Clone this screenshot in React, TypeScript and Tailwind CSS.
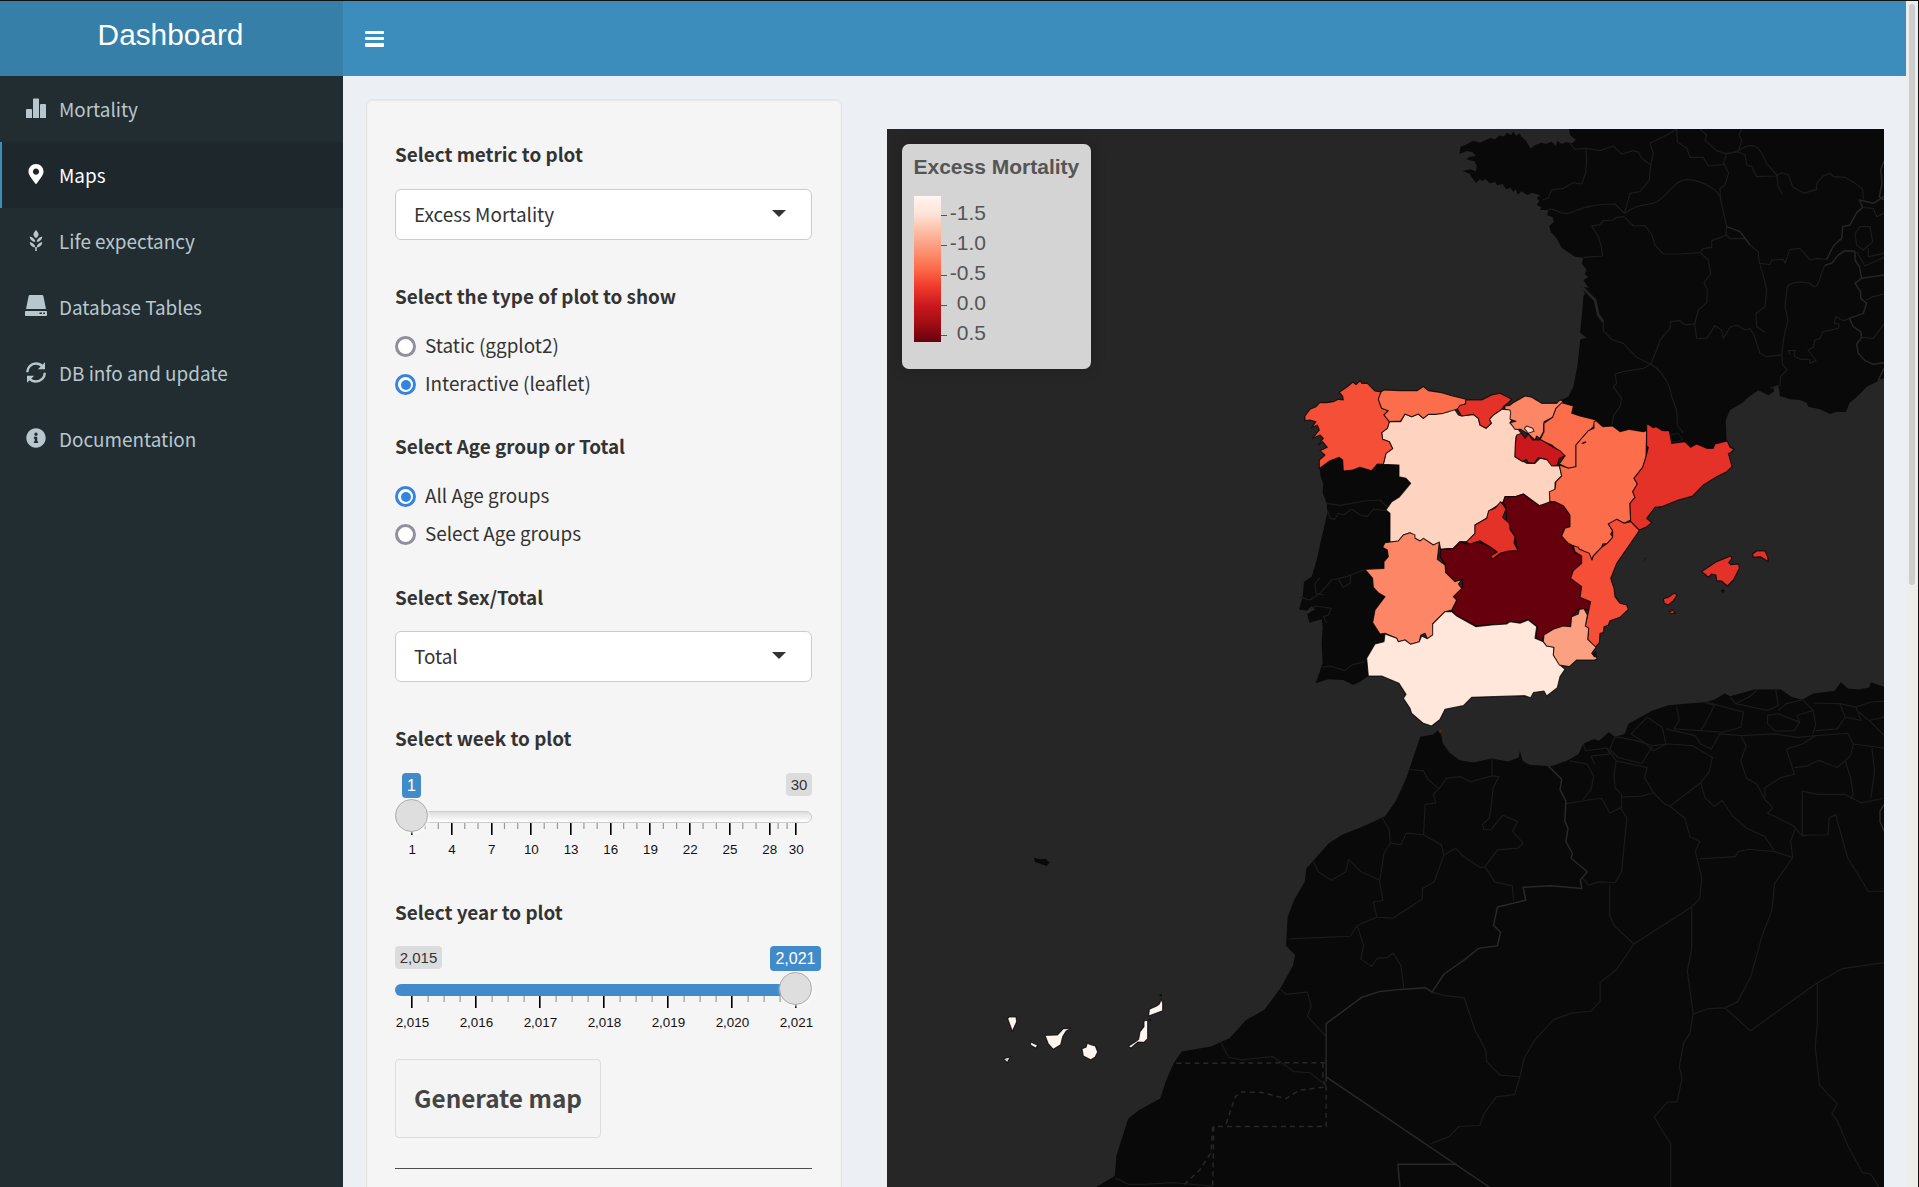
import { ReactNode } from "react";
import { FaMapMarkerAlt, FaInfoCircle } from "react-icons/fa";

const SANS = "font-['Noto_Sans_CJK_SC',sans-serif]";
const ARIAL = "font-['Liberation_Sans',Arial,sans-serif]";

function BarsIcon() {
  return (
    <svg width="20" height="20" viewBox="0 0 20 20" fill="currentColor">
      <path d="M0 12a1 1 0 0 1 1-1h4a1 1 0 0 1 1 1v8H0zM7 1.500a1 1 0 0 1 1-1h4a1 1 0 0 1 1 1V20H7zM14 7a1 1 0 0 1 1-1h4a1 1 0 0 1 1 1v13h-6z" />
    </svg>
  );
}

function GrainIcon() {
  return (
    <svg width="14" height="21" viewBox="0 0 14 21" fill="currentColor">
      <path d="M7 0c1.500 1.500 2.500 3 2.500 4.500S8.500 7 7 8.200C5.500 7 4.500 6 4.500 4.500S5.500 1.500 7 0z" />
      <path d="M.7 6.500C4 7.200 6.200 9 6.300 12 3 11.600.8 9.700.7 6.500zM13.300 6.500C10 7.200 7.800 9 7.700 12c3.300-.4 5.500-2.300 5.600-5.500z" />
      <path d="M.7 12C4 12.700 6.200 14.500 6.300 17.500 3 17.100.8 15.200.7 12zM13.300 12C10 12.700 7.800 14.500 7.700 17.500c3.300-.4 5.500-2.300 5.600-5.500z" />
      <path d="M6.200 17h1.600v4H6.200z" />
    </svg>
  );
}

function DiskIcon() {
  return (
    <svg width="22" height="22" viewBox="0 0 22 22" fill="currentColor">
      <path d="M4.800 0h12.400c.6 0 1 .3 1.100.8L21 14H1L3.700.8C3.800.3 4.200 0 4.800 0z" />
      <path
        fillRule="evenodd"
        d="M1 16h20c.6 0 1 .4 1 1v3c0 .6-.4 1-1 1H1c-.6 0-1-.4-1-1v-3c0-.6.400-1 1-1zm13.500 1.600v1.500H17v-1.500zm3.800 0v1.500h1.700v-1.500z"
      />
    </svg>
  );
}

function RefreshIcon() {
  return (
    <svg width="20" height="21" viewBox="0 0 20 21">
      <g fill="none" stroke="currentColor" strokeWidth="2.400">
        <path d="M1.200 10.300C1.200 5.300 5.200 1.500 10 1.500c2.600 0 4.800 1 6.500 2.900" />
        <path d="M18.800 10.700c0 5-4 8.800-8.800 8.800-2.600 0-4.800-1-6.500-2.900" />
      </g>
      <path d="M19 .3v7h-7.200zM1 20.700v-7h7.200z" fill="currentColor" />
    </svg>
  );
}

function NavItem({ icon, label, active }: { icon: ReactNode; label: string; active?: boolean }) {
  return (
    <a
      className={
        active
          ? "flex h-[66px] items-center border-l-2 border-[#3c8dbc] bg-[#1e272c] pl-[22px] text-white"
          : "flex h-[66px] items-center border-l-2 border-transparent pl-[22px] text-[#b8c7ce]"
      }
    >
      <span className="mb-[2px] flex w-[23px] justify-center">{icon}</span>
      <span className="ml-[12px] text-[18.900px] leading-7">{label}</span>
    </a>
  );
}

function Sidebar() {
  return (
    <nav className="flex w-[343px] shrink-0 flex-col bg-[#222d32]">
      <NavItem icon={<BarsIcon />} label="Mortality" />
      <NavItem icon={<FaMapMarkerAlt size={20} />} label="Maps" active />
      <NavItem icon={<GrainIcon />} label="Life expectancy" />
      <NavItem icon={<DiskIcon />} label="Database Tables" />
      <NavItem icon={<RefreshIcon />} label="DB info and update" />
      <NavItem icon={<FaInfoCircle size={20} />} label="Documentation" />
    </nav>
  );
}

function Label({ children }: { children: ReactNode }) {
  return <div className="h-7 text-[18.900px] font-bold leading-[27px] text-[#333]">{children}</div>;
}

function SelectBox({ value }: { value: string }) {
  return (
    <div className="mt-[21px] flex h-[51px] items-center justify-between rounded-[6px] border border-[#ccc] bg-white pl-[18px] pr-[25px]">
      <span className="mb-[2px] text-[18.900px] leading-7 text-[#333]">{value}</span>
      <svg width="14" height="7" viewBox="0 0 14 7" className="mb-[2px]">
        <path d="M0 0h14L7 7z" fill="#333" />
      </svg>
    </div>
  );
}

function Radio({ label, checked }: { label: string; checked?: boolean }) {
  return (
    <div className="flex h-7 items-center gap-[9px]">
      {checked ? (
        <span className="mt-[3px] flex size-[21px] items-center justify-center rounded-full border-3 border-[#3584e4] bg-white">
          <span className="size-[10px] rounded-full bg-[#3584e4]" />
        </span>
      ) : (
        <span className="mt-[3px] size-[21px] rounded-full border-3 border-[#8f8f9d] bg-white" />
      )}
      <span className="mb-px text-[18.900px] leading-7 text-[#333]">{label}</span>
    </div>
  );
}

function Axis({ major, minor }: { major: { x: number; text: string }[]; minor: number[] }) {
  return (
    <svg width="437" height="40" viewBox="-10 0 437 40" className="-ml-[10px] block">
      {minor.map((x) => (
        <rect key={x} x={x - 0.5} y="0" width="1.200" height="6" fill="#999" />
      ))}
      {major.map((m) => (
        <g key={m.text}>
          <rect x={Math.round(m.x - 0.6)} y="0" width="1.600" height="12" fill="#000" />
          <text x={m.x + 0.5} y="31" textAnchor="middle" fontSize="13.400" fill="#111" fontFamily="Liberation Sans, Arial, sans-serif">
            {m.text}
          </text>
        </g>
      ))}
    </svg>
  );
}

const WEEKS = [1, 4, 7, 10, 13, 16, 19, 22, 25, 28, 30];
const weekX = (w: number) => 16.7 + (w - 1) * 13.24;
const WEEK_MAJOR = WEEKS.map((w) => ({ x: weekX(w), text: String(w) }));
const WEEK_MINOR = [
  ...Array.from({ length: 27 }, (_, i) => i + 1).filter((w) => (w - 1) % 3 !== 0).map(weekX),
  383,
  392,
];
const YEAR_MAJOR = Array.from({ length: 7 }, (_, i) => ({ x: 16.9 + i * 64, text: `2,0${15 + i}` }));
const YEAR_MINOR = Array.from({ length: 24 }, (_, i) => i)
  .filter((i) => i % 4 !== 0)
  .map((i) => 17 + i * 16);

function Handle() {
  return (
    <span className="block size-[33px] rounded-full border border-[#ababab] bg-[#dedede] shadow-[1px_1px_3px_rgba(255,255,255,0.8)]" />
  );
}

function WeekSlider() {
  return (
    <div className={`mt-[21px] ${ARIAL}`}>
      <div className="flex h-[38px] items-start justify-between">
        <span className="ml-[7px] flex h-[25px] w-[19px] items-center justify-center rounded-[4px] bg-[#428bca] text-[16px] text-white">1</span>
        <span className="flex h-[23px] w-[26px] items-center justify-center rounded-[4px] bg-[#dcdcdc] pt-px text-[15px] text-[#333]">30</span>
      </div>
      <div className="relative z-10 h-3 rounded-full border border-[#ccc] bg-linear-to-b from-[#dedede] to-white">
        <span className="absolute -left-px -top-[13px]">
          <Handle />
        </span>
      </div>
      <Axis major={WEEK_MAJOR} minor={WEEK_MINOR} />
    </div>
  );
}

function YearSlider() {
  return (
    <div className={`mt-[20px] ${ARIAL}`}>
      <div className="flex h-[38px] items-start justify-between">
        <span className="flex h-[23px] w-[47px] items-center justify-center rounded-[4px] bg-[#dcdcdc] pt-px text-[15px] text-[#333]">2,015</span>
        <span className="-mr-[9px] flex h-[25px] w-[51px] items-center justify-center rounded-[4px] bg-[#428bca] text-[16px] text-white">2,021</span>
      </div>
      <div className="relative z-10 mr-[17px] h-3 rounded-l-full bg-[#428bca]">
        <span className="absolute -right-[17px] -top-[12px]">
          <Handle />
        </span>
      </div>
      <Axis major={YEAR_MAJOR} minor={YEAR_MINOR} />
    </div>
  );
}

function Controls() {
  return (
    <form className="h-[1300px] w-[476px] shrink-0 rounded-[6px] border border-[#e3e3e3] bg-[#f5f5f5] pl-7 pr-[29px] pt-10 shadow-[inset_0_1px_2px_rgba(0,0,0,0.06)]">
      <div className="h-[142px]">
        <Label>Select metric to plot</Label>
        <SelectBox value="Excess Mortality" />
      </div>
      <div className="h-[150px]">
        <Label>Select the type of plot to show</Label>
        <div className="mt-[21px] flex flex-col gap-[10px]">
          <Radio label="Static (ggplot2)" />
          <Radio label="Interactive (leaflet)" checked />
        </div>
      </div>
      <div className="h-[151px]">
        <Label>Select Age group or Total</Label>
        <div className="mt-[21px] flex flex-col gap-[10px]">
          <Radio label="All Age groups" checked />
          <Radio label="Select Age groups" />
        </div>
      </div>
      <div className="h-[141px]">
        <Label>Select Sex/Total</Label>
        <div className="-mt-px">
          <SelectBox value="Total" />
        </div>
      </div>
      <div className="h-[174px]">
        <Label>Select week to plot</Label>
        <WeekSlider />
      </div>
      <div className="h-[161px]">
        <Label>Select year to plot</Label>
        <YearSlider />
      </div>
      <button
        type="button"
        className="flex h-[79px] w-[206px] items-center justify-center whitespace-nowrap rounded-[4px] border border-[#ddd] bg-[#f4f4f4] pb-px text-[24.300px] font-bold text-[#444]"
      >
        Generate map
      </button>
      <hr className="mt-[30px] border-t border-[#4d4d4d]" />
    </form>
  );
}

const FRANCE_LAND =
  "M387 27L390 45 408 60 395 70 378 66 365 72 352 62 348 78 335 65 318 72 305 68 285 75 272 86 258 62 245 50 238 40 228 48 220 34 213 45 200 38 192 50 180 46 165 58 150 54 120 68 100 62 78 74 62 80 58 102 80 93 98 97 108 108 90 110 78 118 104 124 110 138 108 154 90 148 68 153 90 162 98 176 108 189 120 178 128 184 135 176 150 190 165 186 172 196 188 192 198 208 212 204 220 216 228 208 232 224 245 214 262 225 275 218 300 226 290 234 298 242 290 255 304 262 300 270 325 270 322 286 338 292 342 305 328 318 332 335 350 355 365 383 385 397 405 410 430 413 425 430 440 450 434 462 445 472 430 480 446 504 425 500 435 520 430 530 428 560 420 638 440 653 421 658 412 740 400 800 385 830 360 842 360 980 870 1000 880 985 860 970 857 900 870 870 905 850 925 832 955 811 985 826 1002 815 1000 800 1015 795 1020 828 1050 838 1080 840 1100 848 1105 860 1140 868 1170 882 1190 875 1218 876 1228 850 1260 822 1280 800 1332 775 1332 27Z";

const FRANCE_LINES = [
  "M438 85L440 120 437 158 425 192 400 188 370 205 335 210 325 234 308 240",
  "M390 70L405 88 438 85 480 92 520 78 545 102 580 92 595 96 605 115 632 135 640 100 630 70 690 40 710 27",
  "M632 135L628 180 600 215 570 220 553 280",
  "M325 268C350 262 350 284 385 280C420 270 430 254 525 252L553 280C590 255 600 258 640 250C680 238 700 180 740 178C790 182 840 210 842 240L860 320 858 345",
  "M553 290L530 292 520 300 490 302 480 314 455 318 475 350 484 380 488 408 430 412",
  "M553 290L580 318 615 316 636 345 645 375 670 402 720 402 780 398 790 386 815 382 815 362 860 345 870 356 915 355 930 375 955 395 958 430 990 434 995 420 1030 418 1035 430 1050 388 1080 385 1110 420 1130 416 1160 418",
  "M710 27L712 65 740 85 750 112 790 112 805 138 850 134 860 100 895 96 905 60 897 45 905 27",
  "M780 27L800 45 795 60 830 92 860 102 895 92 C940 60 960 80 980 130L1010 165 1015 200 1028 224",
  "M895 96L915 105 920 135 935 140 950 170 1010 168 1025 158 1045 165 1058 200 1090 220 1130 208 1130 190 1150 168 1172 160 1180 170 1215 172 1245 190 1268 208 1270 238",
  "M852 130L866 160 855 195 840 205 842 240",
  "M780 398L805 420 812 462 792 488 802 510 800 548 775 570 764 612 735 614 720 602 692 604 690 625 660 660 650 690 632 733",
  "M764 612L770 655 800 655 825 617 845 630 850 655 870 622 890 615 915 630 930 626 942 645 960 700 980 710 1025 705 1028 735 1042 748 1022 770 1020 795 990 805",
  "M490 605L490 632 515 658 550 670 590 712 632 733 C660 745 690 790 695 830L710 870 712 915 730 940",
  "M632 733L610 745 550 755 525 762 530 790 520 800 545 835 540 860 522 885 515 915",
  "M960 434L968 460 980 510 975 560 948 580 950 620 975 637",
  "M1025 705L1032 650 1044 600 1035 560 1042 500 C1060 480 1100 488 1110 490C1140 530 1140 440 1160 432",
  "M1050 705L1045 692 1065 692 1062 708 1080 718 1108 718 1110 730 1128 722 1104 690 1120 682 1125 660 1140 655 1150 635 1195 625 1198 612 1182 610 1188 590 1210 602 1230 595",
];
const FRANCE_BORDERS = [
  "M860 320L900 335 930 375",
  "M1160 418L1180 378 1205 355 1208 320 1230 315 1250 278 1268 262 1258 240 1300 250 1332 230",
  "M1155 436L1175 430 1195 405 1215 392 1245 394",
  "M1245 394L1245 420 1258 440 1265 475 1245 490 1262 515 1262 535 1280 550 1270 580 1228 595 1240 620 1262 635 1265 652 1250 672 1255 700 1275 722 1300 733 1332 728",
  "M1265 475L1332 465",
  "M1332 122L1322 150 1326 190 1318 230 1332 240",
  "M1332 745L1315 780 1332 780",
];
const FRANCE_FAINT = [
  "M1250 395L1275 438 1332 412",
  "M1265 652L1300 655 1332 612",
  "M1278 540L1300 530 1332 522",
  "M1245 340L1260 320 1290 320 1298 365 1270 390 1250 375 1245 340",
  "M1268 262L1300 265 1310 290 1332 280",
  "M1285 385L1285 410 1332 400",
];

const PORTUGAL_LAND =
  "M118 320L122 350 130 372 128 398 140 430 142 460 135 490 120 555 110 600 95 650 72 665 68 710 57 748 80 752 95 738 105 748 82 762 88 788 125 778 128 800 125 850 128 910 107 970 145 958 190 960 220 975 240 965 265 948 L400 900 400 300 180 290Z";
const PORTUGAL_LINES = [
  "M140 430L180 436 215 430 250 423 300 420 325 445",
  "M142 450L150 475 165 478 175 460 190 465 215 447 240 465 262 470 280 448 318 452",
  "M60 712L90 720 120 700 155 660 200 650 212 645 255 628",
  "M120 652L105 670 108 700 130 705",
  "M175 658L190 682 210 670 212 645",
  "M92 745L110 738 155 745 145 765 130 770 140 790",
  "M128 922L150 918 195 932 215 915 255 905",
];

const GALICIA =
  "M120 127L140 128 160 125 175 118 190 120 188 108 178 97 205 78 218 66 228 74 241 62 245 70 262 70 285 93 303 96 295 118 305 145 325 152 312 165 328 185 322 205 305 218 308 238 328 245 338 266 318 280 310 313 292 312 275 332 240 322 218 330 190 333 188 300 178 292 150 302 118 325 118 300 135 285 120 272 142 262 128 245 115 255 130 235 120 225 98 235 118 210 112 195 95 203 108 185 90 180 75 182 75 168 90 148 108 140Z";
const ASTURIAS =
  "M303 96L312 90 360 92 412 92 430 80 445 92 485 98 515 107 558 118 557 130 530 148 505 155 490 160 465 163 445 163 430 175 415 162 395 170 375 162 362 183 328 185 312 165 325 152 305 145 295 118Z";
const CANTABRIA =
  "M540 136L557 132 557 120 605 120 635 105 660 100 672 106 695 118 685 128 672 138 665 148 640 165 628 178 634 190 618 205 600 195 595 175 580 163 545 168 532 147Z";
const CASTILLA_LEON =
  "M328 185L362 185 375 162 395 170 415 162 430 175 445 163 465 163 505 155 520 142 535 165 545 168 580 163 595 175 600 195 618 205 634 190 628 178 640 165 665 148 690 148 702 160 690 190 712 205 725 222 708 230 705 290 740 310 765 310 780 295 805 300 820 318 838 318 845 348 825 368 825 390 810 400 810 432 778 437 730 402 705 410 675 410 670 425 628 452 620 475 585 495 585 520 562 545 540 545 520 565 482 568 478 548 460 555 430 537 420 543 405 535 390 518 370 525 355 543 330 547 330 460 318 450 335 425 357 412 392 370 378 355 357 350 357 315 310 313 318 280 338 266 328 245 308 238 305 218 322 205Z";
const BASQUE =
  "M675 138L690 136 700 128 735 108 755 112 785 130 830 130 842 118 850 128 828 145 818 172 792 185 790 215 780 235 770 228 765 240 745 222 722 208 705 208 690 188 708 184 690 178 692 158 690 150 675 148Z";
const TREVINO = "M733 205L740 198 758 205 762 214 745 220Z";
const RIOJA =
  "M710 225L725 220 735 235 745 222 758 240 785 240 820 262 840 272 855 288 838 295 832 315 815 318 800 298 775 293 762 310 745 308 738 298 728 305 705 290 706 250Z";
const CASTILLA_MANCHA =
  "M675 410L705 410 730 402 778 437 810 425 825 425 850 437 870 465 870 500 855 505 845 528 870 548 885 578 905 588 905 610 880 632 872 655 905 680 900 712 932 725 930 750 895 748 875 770 872 800 850 800 790 830 785 842 768 835 772 800 745 778 720 787 682 785 678 792 588 797 530 768 515 750 530 720 520 708 548 680 546 658 525 665 497 638 497 615 480 590 482 568 520 565 540 545 560 552 595 545 650 570 712 570 705 530 680 490 678 445 670 425Z";
const MADRID =
  "M662 425L678 447 668 472 688 490 690 508 705 530 702 548 714 572 685 573 660 580 638 597 632 588 652 576 630 560 600 542 570 552 558 547 585 520 585 495 620 475 626 452 645 445Z";
const EXTREMADURA =
  "M255 628L312 625 312 605 325 590 322 570 308 562 315 548 355 543 370 525 390 518 405 525 405 535 420 543 430 535 460 555 478 546 472 598 495 615 497 638 525 665 546 658 535 672 545 685 520 710 530 720 515 750 495 755 458 792 460 825 442 836 435 820 422 826 418 845 392 853 375 840 355 845 350 835 315 820 300 822 278 788 285 750 315 710 295 698 280 682 278 655Z";
const ANDALUCIA =
  "M285 852L312 845 315 822 350 835 355 845 375 840 392 853 418 845 425 828 442 836 458 825 458 792 495 755 515 755 530 768 588 800 635 795 680 792 690 785 720 790 745 780 770 800 765 835 790 845 800 858 822 862 820 885 840 915 855 928 840 950 832 983 800 1008 792 993 760 998 752 1013 735 1007 575 1012 550 1037 495 1048 480 1078 455 1098 430 1090 395 1060 390 1045 370 1015 378 1003 357 970 305 948 265 948 260 895Z";
const NAVARRA =
  "M125 128L160 138 155 160 180 168 228 180 220 200 190 230 168 255 168 320 145 325 118 312 135 288 95 255 60 240 72 215 72 190 98 172 108 145Z";
const ARAGON =
  "M228 182L248 200 278 198 300 215 328 208 370 215 380 212 378 290 368 322 342 355 352 372 338 395 345 412 330 430 332 480 312 490 290 478 288 490 265 492 278 512 272 522 278 532 262 550 248 552 245 562 220 588 216 600 208 585 198 578 165 560 145 550 125 528 135 505 150 500 150 465 130 437 105 425 90 425 88 395 105 388 108 365 125 348 118 315 145 325 168 320 168 255 205 212 222 205 222 185Z";
const CATALUNYA =
  "M380 190L400 203 408 200 428 212 448 212 455 250 495 245 512 262 530 252 560 265 580 265 585 252 622 243 630 262 642 268 632 278 625 280 636 320 620 335 590 350 550 375 518 408 475 420 425 440 405 442 380 475 395 488 380 500 358 510 332 485 330 430 345 412 338 395 352 372 342 355 368 322 378 290 385 262 380 258Z";
const VALENCIA =
  "M332 485L358 512 290 610 272 655 282 685 285 710 300 730 320 735 325 748 300 772 270 782 265 795 252 800 250 818 240 820 238 848 225 862 203 838 206 805 196 798 212 725 180 712 185 680 152 655 160 632 185 610 185 588 165 575 160 557 175 562 178 568 208 580 216 600 220 588 245 562 262 550 278 532 278 512 265 492 290 478 312 490Z";
const MURCIA =
  "M178 748L192 746 202 765 196 798 206 805 203 838 228 862 215 880 232 895 225 900 170 900 148 920 118 915 100 885 102 862 80 858 70 845 72 825 100 808 130 798 152 800 155 770 175 762Z";

const AFRICA_LAND =
  "M30 1568L65 1535 68 1475 90 1365 110 1340 150 1305 160 1255 175 1200 190 1165 245 1150 280 1125 310 1072 345 1040 375 975 398 910 402 878 385 850 388 765 400 715 420 660 423 620 465 545 490 520 530 495 570 465 590 420 610 350 636 228 660 222 668 210 675 222 678 248 690 275 710 298 735 305 770 293 800 302 820 290 822 270 827 300 840 312 880 316 910 300 932 280 940 250 960 235 970 240 988 215 1000 228 1018 220 1025 190 1070 150 1100 135 1170 125 1185 118 1205 100 1215 108 1260 88 1310 88 1330 110 1350 118 1370 100 1410 92 1422 66 1435 85 1455 88 1475 82 1478 66 1503 80 1503 1568Z";

const AFRICA_BORDERS = [
  "M875 315L900 355 897 385 908 420 906 480 912 500 908 540 920 575 918 590 948 630 935 655 938 680 880 672 828 676 833 715 780 735 773 790 786 810 780 850 745 858 720 890 680 935 658 988 645 975 600 980 560 986 525 1005 460 1082 460 1240",
  "M460 1240L765 1568",
  "M598 1568L594 1500 704 1500",
  "M1503 430L1495 450 1495 480 1503 510",
];
const AFRICA_DASHED = [
  "M180 1200L460 1198",
  "M454 1200L454 1250 460 1270 410 1280 385 1305 340 1287 300 1285 290 1300 272 1385",
  "M460 1240L460 1388 250 1388 248 1568",
  "M248 1388L245 1465 225 1515 190 1568",
];
const AFRICA_LINES = [
  "M770 293L770 345 783 347 772 380 768 440 765 470 752 490 755 505 768 505 790 462 818 480 808 510 828 545 818 560 780 565 757 615 775 660 808 672 810 715",
  "M770 345L730 362 710 347 685 352 670 385 660 400 665 425 645 430 642 520 610 515 600 550 580 545 578 505 565 470",
  "M615 325L642 330 650 355 672 385",
  "M642 520L675 550 680 580 702 560 715 582 748 618 757 615",
  "M680 580L662 660 640 680 640 710 585 768 555 765 548 720 566 715 560 660 568 575 580 545",
  "M437 600L445 630 470 655 497 630 502 593 525 630 560 655",
  "M555 765L518 790 505 822 455 825 390 830",
  "M518 790L530 850 525 890 545 912 555 888 575 885 585 872 600 910 605 975",
  "M375 980L385 995 425 988 432 1030 425 1060 460 1120",
  "M262 1135L278 1182 300 1190 360 1180 400 1225 430 1228 455 1260",
  "M658 988L680 998 718 1005 738 1100 758 1160 760 1195 785 1235 822 1240",
  "M65 1540L90 1560 120 1560 170 1555 248 1565",
  "M655 1440L690 1418 708 1388 747 1385 755 1350 778 1300 812 1293 822 1240 830 1185 850 1130 885 1070 920 1050 955 1045 972 1015 972 960 1003 920 1035 845 998 790 990 760 990 668",
  "M1035 845L1143 735 1143 860 1135 925 1146 1053 1140 1110 1128 1140 1120 1210 1125 1245 1116 1315 1098 1315 1073 1360 1104 1440 1104 1568",
  "M1146 1053L1175 1037 1205 1035 1228 1018 1253 945 1275 820 1293 745 1298 665 1332 588 1328 540 1337 500",
  "M1205 1035L1253 1103 1378 960 1425 918 1503 900",
  "M1378 960L1378 1080 1374 1150 1382 1265 1415 1320 1405 1350 1415 1370 1435 1445 1462 1525 1478 1530 1493 1568",
  "M908 428L955 415 975 412 990 455 1010 440 1022 470 1012 630 1000 662 970 660 950 670 940 650",
  "M915 300L948 310 960 345 955 385 940 415",
  "M940 250L945 270 985 262 990 280 955 285 962 310",
  "M985 262L1002 300 998 345 1000 380 1012 400 1012 440",
  "M1002 300L1060 320 1055 350 1072 395 1050 405 1012 408",
  "M1000 228L990 265 1005 290 1050 308 1070 255 1040 240 1000 228",
  "M1070 255L1100 250 1145 255 1182 290 1175 335 1160 365 1102 435 1092 428 1072 395",
  "M1060 170L1030 220 1050 240 1072 270 1095 250 1088 200 1060 170",
  "M1115 140L1120 180 1110 205 1160 210 1175 170 1185 135 1165 125",
  "M1170 125L1205 140 1240 155 1235 200 1200 215 1160 210",
  "M1095 205L1150 225 1160 250 1180 265 1195 220 1235 225 1245 255 1235 300 1245 350 1265 370 1280 415",
  "M1160 365L1168 410 1185 435 1200 418 1220 465 1245 500 1280 525 1298 570 1332 588",
  "M1102 435L1130 470 1140 525 1158 540 1150 570 1162 650 1158 710 1143 735",
  "M1158 592L1225 585 1230 570 1250 563 1298 570",
  "M1280 415L1295 440 1285 455 1335 495 1350 525 1350 390 1378 400 1430 400 1460 425 1500 412",
  "M1350 522L1398 520 1400 470 1412 460 1435 590 1473 688 1503 688",
  "M1280 410L1280 380 1310 350 1335 340 1320 265 1350 250 1375 225 1435 218 1445 250 1440 285 1415 320 1380 298 1360 315 1335 320",
  "M1235 225L1300 220 1340 230 1375 225",
  "M1285 165L1305 160 1345 185 1335 210 1300 212 1285 190 1285 165",
  "M1225 130L1250 110 1265 90M1300 88L1305 135 1285 150 1225 130 1215 110",
  "M1305 150L1320 130 1350 118 1370 150 1340 165 1345 185",
  "M1370 150L1375 190 1370 220M1370 128L1420 130 1430 170 1415 205 1375 210",
  "M1420 130L1450 140 1460 180 1430 170M1450 140L1478 125 1503 122",
  "M1455 155L1475 180 1503 170M1475 180L1503 225",
  "M1445 250L1503 262M1430 300L1440 350 1445 400 1440 415M1480 262L1485 330 1478 410",
];

function Region({ d, fill }: { d: string; fill: string }) {
  return (
    <path d={d} fill={fill} stroke="#000" strokeOpacity="0.750" strokeWidth="1.100" strokeLinejoin="round" vectorEffect="non-scaling-stroke" />
  );
}

function Lines({ items, color, width, dash }: { items: string[]; color: string; width: number; dash?: string }) {
  return (
    <g fill="none" stroke={color} strokeWidth={width} strokeDasharray={dash} strokeLinejoin="round">
      {items.map((d) => (
        <path key={d} d={d} vectorEffect="non-scaling-stroke" />
      ))}
    </g>
  );
}

function MapDrawing() {
  return (
    <svg width="997" height="1058" viewBox="887 129 997 1058" className="block">
      <g transform="translate(1440 120) scale(0.33333)">
        <path d={FRANCE_LAND} fill="#090909" />
        <path d="M425 500L465 540 475 585 490 606" fill="none" stroke="#262626" strokeWidth="8" />
        <Lines items={FRANCE_LINES} color="#1c1c1c" width={1.2} />
        <Lines items={FRANCE_BORDERS} color="#262626" width={1.5} />
        <Lines items={FRANCE_FAINT} color="#1c1c1c" width={1.2} />
      </g>
      <g transform="translate(1080 660) scale(0.5351 0.3361)">
        <path d={AFRICA_LAND} fill="#090909" />
        <Lines items={AFRICA_LINES} color="#1b1b1b" width={1.2} />
        <Lines items={AFRICA_BORDERS} color="#282828" width={1.5} />
        <Lines items={AFRICA_DASHED} color="#282828" width={1.5} dash="5 4" />
      </g>
      <g transform="translate(1280 360) scale(0.33333)">
        <path d={PORTUGAL_LAND} fill="#090909" />
        <Lines items={PORTUGAL_LINES} color="#1c1c1c" width={1.2} />
        <Region d={CASTILLA_LEON} fill="#fed4c1" />
        <Region d={GALICIA} fill="#f64f37" />
        <Region d={ASTURIAS} fill="#fc6d4b" />
        <Region d={CANTABRIA} fill="#e43228" />
        <Region d={BASQUE} fill="#fc8666" />
        <Region d={TREVINO} fill="#fed4c1" />
        <Region d={CASTILLA_MANCHA} fill="#67000d" />
        <Region d={MADRID} fill="#e43228" />
        <Region d={EXTREMADURA} fill="#fc8666" />
        <Region d={ANDALUCIA} fill="#ffe7dc" />
        <path d="M477 1112L486 1110 480 1119Z" fill="#a01818" />
      </g>
      <g transform="translate(1520 360) scale(0.33333)">
        <Region d={NAVARRA} fill="#fc6d4b" />
        <Region d={ARAGON} fill="#fc6d4b" />
        <Region d={CATALUNYA} fill="#e43228" />
        <Region d={VALENCIA} fill="#f64f37" />
        <Region d={MURCIA} fill="#fca082" />
        <path d="M183 250L196 244 200 247 190 252Z" fill="#2a0d08" />
        <path d="M216 882L228 874 232 890 222 892Z" fill="#151010" />
        <path d="M452 225L475 220 488 238 470 245 455 245Z" fill="#090909" stroke="#222" strokeWidth="2" />
        <path d="M373 602L374 596 380 594" fill="none" stroke="#0c0c0c" strokeWidth="2" />
        <Region d="M545 635L590 605 632 588 636 595 626 608 632 614 656 612 658 625 640 660 622 678 605 663 590 662 588 645 575 642 565 652 558 645Z" fill="#e43228" />
        <Region d="M698 582L710 573 735 573 742 588 745 605 722 590 700 592Z" fill="#e43228" />
        <Region d="M430 716L445 712 462 700 472 704 460 722 445 735 433 730Z" fill="#e43228" />
        <Region d="M449 755L458 750 466 760 449 760Z" fill="#e43228" />
        <Region d="M604 692L612 690 610 697Z" fill="#5a1410" />
      </g>
      <g transform="translate(1280 360) scale(0.33333)">
        <Region d={RIOJA} fill="#cb181d" />
      </g>
      <g transform="translate(980 840) scale(0.33333)">
        <path d="M162 53L180 58 197 56 209 68 200 78 185 73 165 66Z" fill="#090909" />
        <Region d="M83 536L88 530 108 531 110 545 97 574 92 560Z" fill="#fff5f0" />
        <Region d="M70 657L92 649 82 668Z" fill="#d8cfca" />
        <Region d="M152 605L160 610 173 616 167 624 152 616Z" fill="#fff5f0" />
        <Region d="M195 586L232 585 250 566 272 565 258 574 248 590 242 614 220 628 205 612Z" fill="#fff5f0" />
        <Region d="M322 610L335 615 346 618 353 636 345 652 332 659 310 648 306 626 318 622Z" fill="#fff5f0" />
        <Region d="M492 543L503 541 503 596 492 607 474 606 453 624 445 619 465 606 476 598 480 575 492 560Z" fill="#fff5f0" />
        <Region d="M508 508L530 498 538 492 544 478 548 490 548 512 506 528Z" fill="#fff5f0" />
        <path d="M539 462h7v7h-7zM504 540l9-4v8z" fill="#0c0c0c" />
      </g>
    </svg>
  );
}

const LEGEND = ["-1.5", "-1.0", "-0.5", "0.0", "0.5"];

function Legend() {
  return (
    <div className={`absolute left-[15px] top-[15px] h-[225px] w-[189px] rounded-[7px] bg-[#d4d4d4] pl-3 text-[#555] shadow-[0_0_15px_rgba(0,0,0,0.2)] ${ARIAL}`}>
      <div className="-ml-[0.500px] pt-[11px] text-[21px] font-bold leading-6">Excess Mortality</div>
      <div className="mt-[17px] flex">
        <div className="h-[146px] w-[27px] bg-[linear-gradient(to_bottom,#fff5f0_0%,#fee4d8_12%,#fcbba1_25%,#fc9272_38%,#fb6a4a_50%,#ef3b2c_62%,#cb181d_75%,#a50f15_86%,#67000d_100%)]" />
        <div className="mt-[3px] flex flex-col">
          {LEGEND.map((value) => (
            <div key={value} className="flex h-[30px] items-center">
              <span className="mt-[2px] h-px w-[6px] bg-[#555]" />
              <span className="mb-[2px] w-[39px] text-right text-[21px] leading-[30px]">{value}</span>
            </div>
          ))}
        </div>
      </div>
    </div>
  );
}

export default function App() {
  return (
    <div className={`flex h-[1187px] w-[1919px] overflow-hidden border-r border-t border-[#111] bg-[#ecf0f5] ${SANS}`}>
      <div className="flex w-[1906px] shrink-0 flex-col">
        <header className="flex h-[75px] shrink-0 text-white">
          <div className="flex w-[343px] justify-center bg-[#367fa9] pr-[2px] font-['Liberation_Sans',Arial,sans-serif] text-[29.800px] leading-[67px]">
            Dashboard
          </div>
          <div className="flex flex-1 bg-[#3c8dbc] pl-[22px] pt-[29.500px]">
            <div className="flex h-4 w-[19px] flex-col justify-between">
              <span className="h-[3.500px] rounded-[1px] bg-white" />
              <span className="h-[3.500px] rounded-[1px] bg-white" />
              <span className="h-[3.500px] rounded-[1px] bg-white" />
            </div>
          </div>
        </header>
        <div className="flex h-[1111px] overflow-hidden">
          <Sidebar />
          <main className="flex flex-1 items-start gap-[45px] overflow-hidden pl-[23px] pt-[23px]">
            <Controls />
            <section className="relative mt-[30px] h-[1058px] w-[997px] overflow-hidden bg-[#262626]">
              <MapDrawing />
              <Legend />
            </section>
          </main>
        </div>
      </div>
      <div className="flex w-3 shrink-0 justify-center bg-[#ededeb] pt-[3px]">
        <div className="h-[581px] w-[6px] rounded-full bg-[#cdcdcd]" />
      </div>
    </div>
  );
}
